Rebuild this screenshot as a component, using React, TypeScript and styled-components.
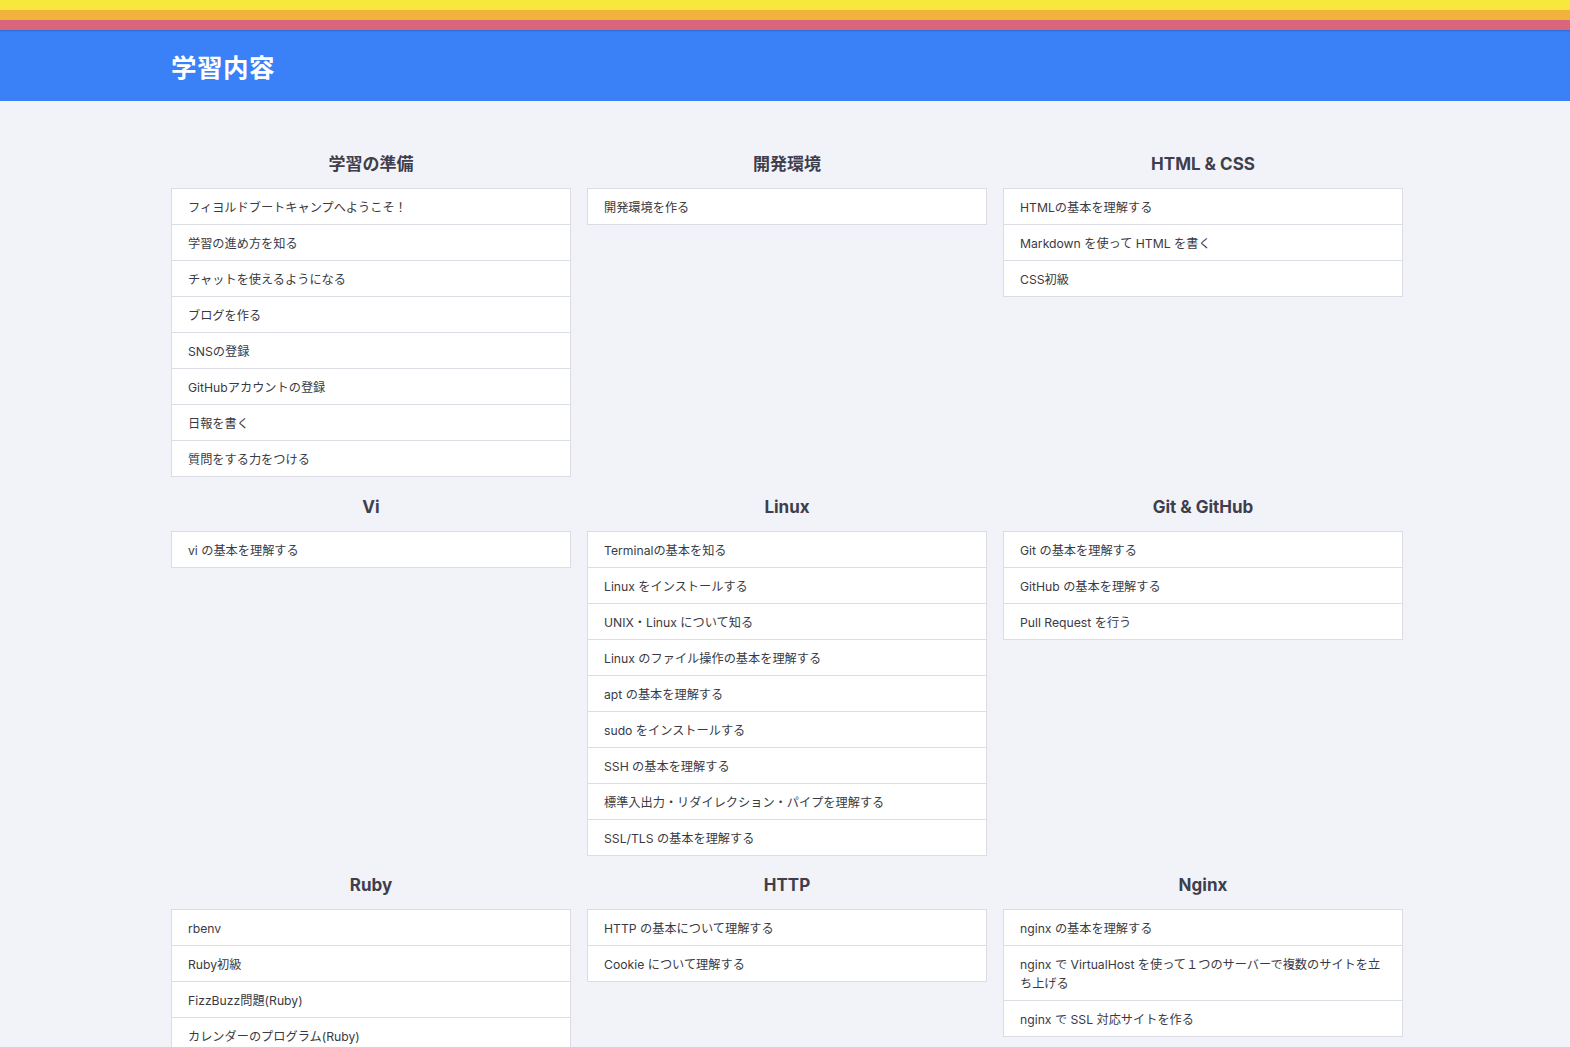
import React from "react";
import styled, { createGlobalStyle } from "styled-components";

const Global = createGlobalStyle`
  html, body { margin: 0; padding: 0; }
  body {
    background: #f2f3f8;
    font-family: Inter, "Noto Sans CJK JP", "Noto Sans", sans-serif;
    color: #3c3c48;
  }
`;

const Stripes = styled.div`
  display: flex;
  flex-direction: column;
`;

const Stripe = styled.div<{ $color: string }>`
  height: 10px;
  background: ${(p) => p.$color};
`;

const Header = styled.header`
  background: #3a80f7;
  height: 71px;
  display: flex;
  align-items: center;
  box-shadow: inset 0 3px 2px -2px rgba(0, 0, 0, 0.18);
`;

const Inner = styled.div`
  width: 1232px;
  margin-left: 171px;
  box-sizing: border-box;
`;

const PageTitle = styled.h1`
  margin: 0;
  color: #fff;
  font-size: 25.5px;
  font-weight: 700;
  letter-spacing: 0.5px;
  line-height: 1;
  padding-top: 5px;
`;

const Main = styled.main`
  padding-top: 51px;
`;

const Grid = styled.div`
  display: grid;
  grid-template-columns: repeat(3, 400px);
  column-gap: 16px;
  row-gap: 17.5px;
`;

const Section = styled.section`
  display: flex;
  flex-direction: column;
`;

const SectionTitle = styled.h2`
  margin: 0 0 12px;
  text-align: center;
  font-size: 17px;
  font-weight: 700;
  line-height: 24px;
  color: #3e3e4d;
`;

const List = styled.ul`
  list-style: none;
  margin: 0;
  padding: 0;
  background: #fff;
  border: 1px solid #dcdde4;
`;

const Item = styled.li`
  padding: 9px 16px 7px 16px;
  font-size: 12.2px;
  line-height: 19px;
  color: #3a3a44;
  & + & {
    border-top: 1px solid #dcdde4;
  }
`;

const sections: { title: string; items: string[] }[] = [
  {
    title: "学習の準備",
    items: [
      "フィヨルドブートキャンプへようこそ！",
      "学習の進め方を知る",
      "チャットを使えるようになる",
      "ブログを作る",
      "SNSの登録",
      "GitHubアカウントの登録",
      "日報を書く",
      "質問をする力をつける",
    ],
  },
  { title: "開発環境", items: ["開発環境を作る"] },
  {
    title: "HTML & CSS",
    items: ["HTMLの基本を理解する", "Markdown を使って HTML を書く", "CSS初級"],
  },
  { title: "Vi", items: ["vi の基本を理解する"] },
  {
    title: "Linux",
    items: [
      "Terminalの基本を知る",
      "Linux をインストールする",
      "UNIX・Linux について知る",
      "Linux のファイル操作の基本を理解する",
      "apt の基本を理解する",
      "sudo をインストールする",
      "SSH の基本を理解する",
      "標準入出力・リダイレクション・パイプを理解する",
      "SSL/TLS の基本を理解する",
    ],
  },
  {
    title: "Git & GitHub",
    items: ["Git の基本を理解する", "GitHub の基本を理解する", "Pull Request を行う"],
  },
  {
    title: "Ruby",
    items: ["rbenv", "Ruby初級", "FizzBuzz問題(Ruby)", "カレンダーのプログラム(Ruby)"],
  },
  {
    title: "HTTP",
    items: ["HTTP の基本について理解する", "Cookie について理解する"],
  },
  {
    title: "Nginx",
    items: [
      "nginx の基本を理解する",
      "nginx で VirtualHost を使って１つのサーバーで複数のサイトを立ち上げる",
      "nginx で SSL 対応サイトを作る",
    ],
  },
];

export default function App() {
  return (
    <>
      <Global />
      <Stripes>
        <Stripe $color="#f8e83c" />
        <Stripe $color="#f1b23e" />
        <Stripe $color="#da667e" />
      </Stripes>
      <Header>
        <Inner>
          <PageTitle>学習内容</PageTitle>
        </Inner>
      </Header>
      <Main>
        <Inner>
          <Grid>
            {sections.map((s) => (
              <Section key={s.title}>
                <SectionTitle>{s.title}</SectionTitle>
                <List>
                  {s.items.map((it) => (
                    <Item key={it}>{it}</Item>
                  ))}
                </List>
              </Section>
            ))}
          </Grid>
        </Inner>
      </Main>
    </>
  );
}
